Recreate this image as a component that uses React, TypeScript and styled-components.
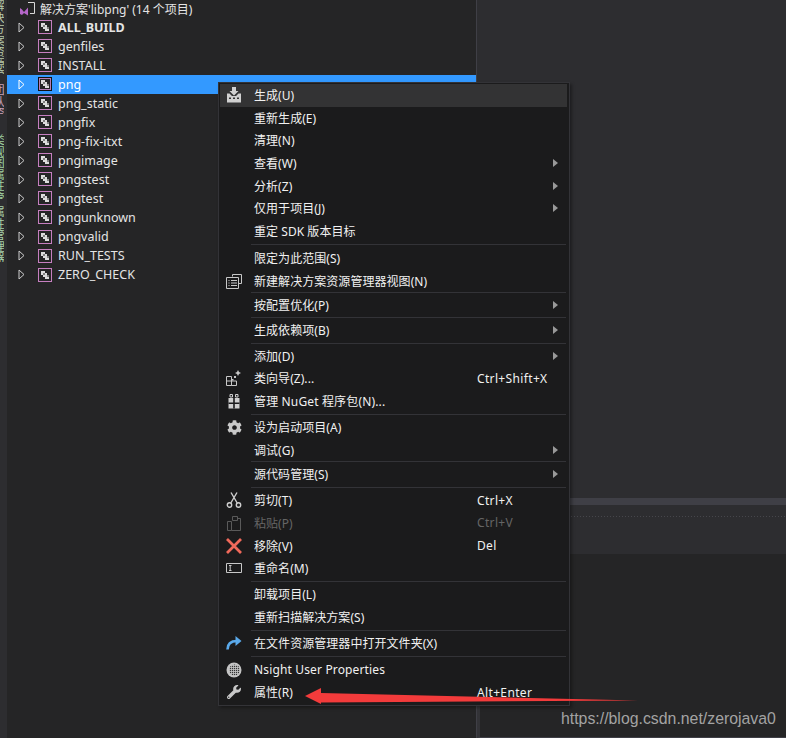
import React from "react";
import styled, { createGlobalStyle } from "styled-components";
import { FaCog, FaWrench } from "react-icons/fa";

const Global = createGlobalStyle`
  html, body { margin: 0; padding: 0; background: #252526; }
  body { font-family: "Noto Sans", "Noto Sans CJK SC", sans-serif; }
`;

const Page = styled.div`
  position: relative;
  width: 786px;
  height: 738px;
  overflow: hidden;
  display: grid;
  grid-template-columns: 7px 470px 1fr;
  background: #252526;
  color: #f1f1f1;
  font-size: 12px;
`;

const Strip = styled.div`
  background: #2d2d30;
  overflow: hidden;
  display: flex;
  flex-direction: column;
`;
const StripLabel = styled.div<{ $h: number; $gap: number; $c: string }>`
  writing-mode: vertical-rl;
  width: 12px;
  height: ${(p) => p.$h}px;
  margin-top: ${(p) => p.$gap}px;
  margin-left: -8px;
  font-size: 11.5px;
  line-height: 12px;
  overflow: hidden;
  white-space: nowrap;
  color: ${(p) => p.$c};
`;

const Tree = styled.div`
  background: #252526;
  border-right: 1px solid #3f3f46;
  display: flex;
  flex-direction: column;
`;
const TitleRow = styled.div`
  height: 17.5px;
  display: flex;
  align-items: center;
  gap: 5px;
  padding-left: 13px;
  color: #e4e4e4;
  font-size: 12px;
`;
const Row = styled.div<{ $sel?: boolean; $bold?: boolean }>`
  height: 19.05px;
  display: flex;
  align-items: center;
  padding-left: 11px;
  background: ${(p) => (p.$sel ? "#3399ff" : "transparent")};
  color: ${(p) => (p.$sel ? "#ffffff" : "#e4e4e4")};
  font-weight: ${(p) => (p.$bold ? 700 : 400)};
  font-size: 12.5px;
`;
const Caret = styled.svg`
  width: 7px;
  height: 11px;
  margin-right: 13px;
  flex: none;
`;
const ProjIcon = styled.svg`
  width: 14px;
  height: 14px;
  margin-right: 6px;
  flex: none;
`;

const Right = styled.div`
  display: flex;
  flex-direction: column;
  background: #252526;
`;
const RightTop = styled.div`
  height: 498px;
  background: #2d2d30;
`;
const Band = styled.div`
  height: 7px;
  background: #3f3f46;
`;
const Dock = styled.div`
  height: 49px;
  background: #2d2d30;
  padding-top: 10px;
  box-sizing: border-box;
`;
const Dots = styled.div`
  height: 3px;
  background-image: radial-gradient(#46464b 0.6px, transparent 0.7px);
  background-size: 3px 3px;
`;
const RightFill = styled.div`
  flex: 1;
  border-left: 3px solid #333337;
  border-bottom: 1px solid #3f3f46;
  margin-top: 150px;
`;

const Menu = styled.div`
  position: absolute;
  left: 218px;
  top: 82px;
  width: 352px;
  box-sizing: border-box;
  background: #1b1b1c;
  border: 1px solid #333337;
  padding: 1px 2px 1px 1px;
  box-shadow: 2px 2px 3px rgba(0, 0, 0, 0.35);
  display: flex;
  flex-direction: column;
`;
const Item = styled.div<{ $hover?: boolean; $off?: boolean }>`
  height: 22.6px;
  display: grid;
  grid-template-columns: 34px 223px 1fr 14px;
  align-items: center;
  background: ${(p) => (p.$hover ? "#333334" : "transparent")};
  color: ${(p) => (p.$off ? "#656565" : "#f1f1f1")};
  font-size: 12px;
  white-space: nowrap;
`;
const IconCell = styled.div`
  display: flex;
  justify-content: center;
  align-items: center;
  height: 100%;
  padding-right: 6px;
  color: #c8c8c8;
`;
const Label = styled.span<{ $latin?: boolean }>`
  letter-spacing: ${(p) => (p.$latin ? "0.15px" : "0.05px")};
`;
const Shortcut = styled.span`
  letter-spacing: 0.35px;
`;
const Sep = styled.div<{ $gap: number }>`
  height: 1px;
  margin: ${(p) => (p.$gap - 1) / 2}px 1px ${(p) => (p.$gap - 1) / 2}px 31px;
  background: #333337;
`;
const Sub = styled.svg`
  width: 5px;
  height: 8px;
  justify-self: start;
`;

const Arrow = styled.svg`
  position: absolute;
  left: 300px;
  top: 680px;
  width: 345px;
  height: 30px;
`;
const Mark = styled.div`
  position: absolute;
  left: 561px;
  top: 709px;
  font-family: "Liberation Sans", Arial, sans-serif;
  font-size: 15.85px;
  line-height: 20px;
  color: #a3a3a3;
  white-space: nowrap;
`;

const Ico = styled.svg`
  width: 16px;
  height: 16px;
`;

const BuildIcon = () => (
  <Ico viewBox="0 0 16 16">
    <path d="M6 0h4v4h2.5L8 8.5 3.5 4H6z" fill="#d0d0d0" />
    <path d="M1 6.5h2.5l2.5 2.5H1zM10 9l2.5-2.5H15V9z" fill="#d0d0d0" />
    <path d="M1 9h14v6.5H1z" fill="#d0d0d0" />
    <path d="M3 10.5h2V12H3zM7 10.5h2V12H7zM11 10.5h2V12h-2z" fill="#333334" />
  </Ico>
);
const ViewIcon = () => (
  <Ico viewBox="0 0 16 16" fill="none" stroke="#c8c8c8">
    <path d="M6.5 3.5V1.5h9v9h-2.5" />
    <path d="M.5 4.5h12v11H.5z" fill="#1b1b1c" />
    <path d="M2.5 7.5h1M5 7.5h6M2.5 10h1M5 10h6M2.5 12.5h1M5 12.5h6" />
  </Ico>
);
const WizardIcon = () => (
  <Ico viewBox="0 0 16 16" fill="none" stroke="#c8c8c8">
    <path d="M.5 6.5h5v9h-5zM5.5 11h5v4.5h-5zM.5 11h5" />
    <path d="M12 0l1 2 2 1-2 1-1 2-1-2-2-1 2-1z" fill="#c8c8c8" stroke="none" />
    <path d="M8 6h2v2H8zM6 9h1.5v1.5H6z" fill="#c8c8c8" stroke="none" />
  </Ico>
);
const NugetIcon = () => (
  <Ico viewBox="0 0 16 16">
    <path d="M2.5 5h11v10.5h-11z" fill="#d0d0d0" />
    <path d="M4 1.5h2.5v2.5H4zM9.5 1.5H12v2.5H9.5z" fill="none" stroke="#d0d0d0" />
    <path d="M7.2 5h1.6v10.5H7.2zM2.5 9.5h11V11h-11z" fill="#1b1b1c" />
  </Ico>
);
const ScissorsIcon = () => (
  <Ico viewBox="0 0 16 16" fill="none" stroke="#cfcfcf" strokeWidth="1.4">
    <circle cx="3.5" cy="13" r="2.2" />
    <circle cx="12.5" cy="13" r="2.2" />
    <path d="M4.8 11L11 .5M11.2 11L5 .5" />
  </Ico>
);
const PasteIcon = () => (
  <Ico viewBox="0 0 16 16" fill="none" stroke="#5a5a5a">
    <path d="M1.5 6.5h4v9h-4zM5.5 15.5h9V3.5h-3" />
    <path d="M6.5 1.5h5v4h-5z" />
  </Ico>
);
const RemoveIcon = () => (
  <Ico viewBox="0 0 16 16">
    <path d="M1 1l14 14M15 1L1 15" stroke="#f0695a" strokeWidth="2.8" />
  </Ico>
);
const RenameIcon = () => (
  <Ico viewBox="0 0 16 16" fill="none" stroke="#c8c8c8">
    <path d="M.5 3.5h15v9H.5z" />
    <path d="M3 5.5h2.5M4.2 5.5v5M3 10.5h2.5" />
  </Ico>
);
const OpenIcon = () => (
  <Ico viewBox="0 0 16 16" fill="none">
    <path d="M1.5 14.5C1.5 9.5 4.5 6 11 6" stroke="#5aa9ea" strokeWidth="2.6" />
    <path d="M9.5 1l6 5-6 5z" fill="#5aa9ea" />
  </Ico>
);
const GlobeIcon = () => (
  <Ico viewBox="0 0 16 16">
    <defs>
      <pattern id="dotgrid" width="2" height="2" patternUnits="userSpaceOnUse">
        <rect width="1.2" height="1.2" fill="#333" />
      </pattern>
    </defs>
    <circle cx="8" cy="8" r="7.5" fill="#c4c4c4" />
    <circle cx="8.5" cy="8" r="5.5" fill="url(#dotgrid)" />
  </Ico>
);

const ProjectGlyph = ({ sel }: { sel?: boolean }) => (
  <ProjIcon viewBox="0 0 14 14">
    <rect x="0.5" y="0.5" width="13" height="13" fill="#252526" stroke={sel ? "#111" : "#c67fc0"} />
    {sel && <rect x="1.5" y="1.5" width="11" height="11" fill="#252526" stroke="#b67fb8" />}
    <path d="M3 3h4v2h2v2h2v4H7V9H5V7H3z" fill="#dcdcdc" />
    <path d="M5 5h2v2H5zM9 7h2v2H9z" fill="#808080" />
  </ProjIcon>
);
const CaretGlyph = ({ sel }: { sel?: boolean }) => (
  <Caret viewBox="0 0 7 11">
    <path d="M1 1l5 4.5L1 10z" fill="none" stroke={sel ? "#ffffff" : "#cccccc"} />
  </Caret>
);

const projects: { name: string; bold?: boolean; sel?: boolean }[] = [
  { name: "ALL_BUILD", bold: true },
  { name: "genfiles" },
  { name: "INSTALL" },
  { name: "png", sel: true },
  { name: "png_static" },
  { name: "pngfix" },
  { name: "png-fix-itxt" },
  { name: "pngimage" },
  { name: "pngstest" },
  { name: "pngtest" },
  { name: "pngunknown" },
  { name: "pngvalid" },
  { name: "RUN_TESTS" },
  { name: "ZERO_CHECK" },
];

type Entry = {
  label?: string;
  gap?: number;
  icon?: React.ReactNode;
  key?: string;
  sub?: boolean;
  hover?: boolean;
  off?: boolean;
  latin?: boolean;
};

const entries: Entry[] = [
  { label: "生成(U)", icon: <BuildIcon />, hover: true },
  { label: "重新生成(E)" },
  { label: "清理(N)" },
  { label: "查看(W)", sub: true },
  { label: "分析(Z)", sub: true },
  { label: "仅用于项目(J)", sub: true },
  { label: "重定 SDK 版本目标" },
  { gap: 4.7 },
  { label: "限定为此范围(S)" },
  { label: "新建解决方案资源管理器视图(N)", icon: <ViewIcon /> },
  { gap: 1.8 },
  { label: "按配置优化(P)", sub: true },
  { gap: 2.7 },
  { label: "生成依赖项(B)", sub: true },
  { gap: 2.7 },
  { label: "添加(D)", sub: true },
  { label: "类向导(Z)...", icon: <WizardIcon />, key: "Ctrl+Shift+X" },
  { label: "管理 NuGet 程序包(N)...", icon: <NugetIcon />, latin: true },
  { gap: 3.7 },
  { label: "设为启动项目(A)", icon: <FaCog size={15} /> },
  { label: "调试(G)", sub: true },
  { gap: 1.8 },
  { label: "源代码管理(S)", sub: true },
  { gap: 3.7 },
  { label: "剪切(T)", icon: <ScissorsIcon />, key: "Ctrl+X" },
  { label: "粘贴(P)", icon: <PasteIcon />, key: "Ctrl+V", off: true },
  { label: "移除(V)", icon: <RemoveIcon />, key: "Del" },
  { label: "重命名(M)", icon: <RenameIcon /> },
  { gap: 3.7 },
  { label: "卸载项目(L)" },
  { label: "重新扫描解决方案(S)" },
  { gap: 3.7 },
  { label: "在文件资源管理器中打开文件夹(X)", icon: <OpenIcon /> },
  { gap: 3.7 },
  { label: "Nsight User Properties", icon: <GlobeIcon />, latin: true },
  { label: "属性(R)", icon: <FaWrench size={14} />, key: "Alt+Enter" },
];

const stripLabels = [
  { t: "解决方案资源管理", h: 74, g: 0, c: "#b8c8a8" },
  { t: "团队资源", h: 30, g: 10, c: "#c9a0b8" },
  { t: "类视图属性管理器", h: 66, g: 20, c: "#9fd0a0" },
  { t: "属性管理器", h: 56, g: 6, c: "#a8d0a8" },
];

export default function App() {
  return (
    <Page>
      <Global />
      <Strip>
        {stripLabels.map((s) => (
          <StripLabel key={s.t} $h={s.h} $gap={s.g} $c={s.c}>
            {s.t}
          </StripLabel>
        ))}
      </Strip>
      <Tree>
        <TitleRow>
          <svg width="15" height="15" viewBox="0 0 15 15" fill="none">
            <path d="M8 1.5h6.5v11H10" stroke="#d8d8d8" />
            <path d="M0 7l2 1.5L4 11l4-4.5v8L4 12l-2 2-2-1z" fill="#b566c9" />
          </svg>
          解决方案'libpng' (14 个项目)
        </TitleRow>
        {projects.map((p) => (
          <Row key={p.name} $sel={p.sel} $bold={p.bold}>
            <CaretGlyph sel={p.sel} />
            <ProjectGlyph sel={p.sel} />
            {p.name}
          </Row>
        ))}
      </Tree>
      <Right>
        <RightTop />
        <Band />
        <Dock>
          <Dots />
        </Dock>
        <RightFill />
      </Right>
      <Menu>
        {entries.map((e, i) =>
          e.label ? (
            <Item key={i} $hover={e.hover} $off={e.off}>
              <IconCell>{e.icon}</IconCell>
              <Label $latin={e.latin}>{e.label}</Label>
              <Shortcut>{e.key}</Shortcut>
              {e.sub ? (
                <Sub viewBox="0 0 5 8">
                  <path d="M0 0l5 4-5 4z" fill="#999" />
                </Sub>
              ) : (
                <span />
              )}
            </Item>
          ) : (
            <Sep key={i} $gap={e.gap ?? 3} />
          ),
        )}
      </Menu>
      <Arrow viewBox="0 0 345 30">
        <path d="M5 16L21 8v5l317 7.5-317 2V24z" fill="#f33b3b" />
      </Arrow>
      <Mark>https://blog.csdn.net/zerojava0</Mark>
    </Page>
  );
}
